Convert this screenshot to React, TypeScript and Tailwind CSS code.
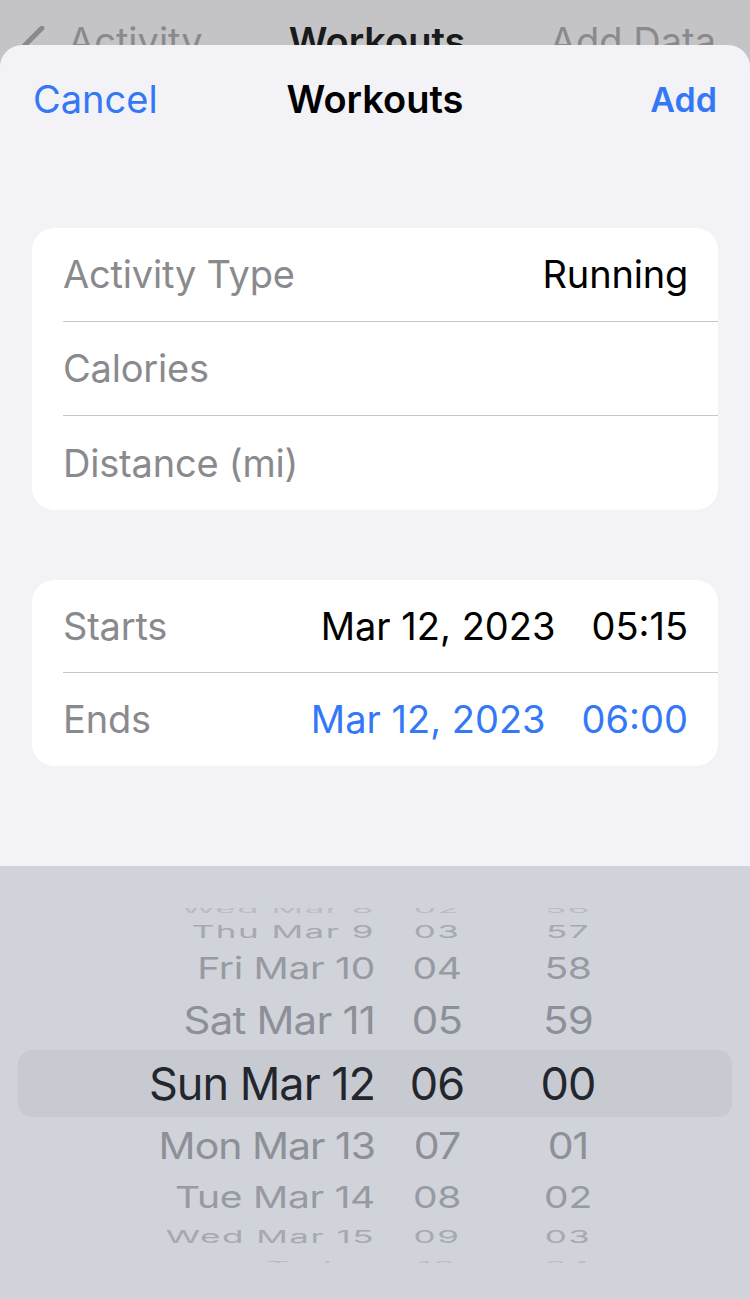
import React from "react";

const font = "font-['Inter','Liberation_Sans',sans-serif]";

type WheelRow = {
  date: string;
  hour: string;
  min: string;
  h: string;
  scale: string;
  color: string;
  size: string;
  selected?: boolean;
};

const rows: WheelRow[] = [
  { date: "Wed Mar 8", hour: "02", min: "56", h: "h-[22px]", scale: "scale-y-[0.3]", color: "text-[#b9bcc2]", size: "text-[35px] tracking-[1.5px]" },
  { date: "Thu Mar 9", hour: "03", min: "57", h: "h-[30px]", scale: "scale-y-[0.5]", color: "text-[#a6a9af]", size: "text-[35px] tracking-[1.5px]" },
  { date: "Fri Mar 10", hour: "04", min: "58", h: "h-[47px]", scale: "scale-y-[0.78]", color: "text-[#979aa1]", size: "text-[39px] tracking-[-0.3px]" },
  { date: "Sat Mar 11", hour: "05", min: "59", h: "h-[59px]", scale: "scale-y-[0.9]", color: "text-[#8d9097]", size: "text-[42px] tracking-[-0.8px]" },
  { date: "Sun Mar 12", hour: "06", min: "00", h: "h-[67px]", scale: "scale-y-100", color: "text-[#23262d]", size: "text-[45px] tracking-[-1px]", selected: true },
  { date: "Mon Mar 13", hour: "07", min: "01", h: "h-[56px]", scale: "scale-y-[0.9]", color: "text-[#8d9097]", size: "text-[41px] tracking-[-1px]" },
  { date: "Tue Mar 14", hour: "08", min: "02", h: "h-[46px]", scale: "scale-y-[0.78]", color: "text-[#979aa1]", size: "text-[39px] tracking-[-0.3px]" },
  { date: "Wed Mar 15", hour: "09", min: "03", h: "h-[29px]", scale: "scale-y-[0.5]", color: "text-[#a6a9af]", size: "text-[35px] tracking-[1.5px]" },
  { date: "Today", hour: "10", min: "04", h: "h-[20px]", scale: "scale-y-[0.3]", color: "text-[#b9bcc2]", size: "text-[35px] tracking-[1.5px]" },
];

function Row({ label, children, last, tall }: { label: string; children?: React.ReactNode; last?: boolean; tall?: boolean }) {
  const h = tall ? "h-[94px]" : "h-[93px]";
  return (
    <div className="pl-[31px]">
      <div
        className={
          last
            ? `flex ${h} items-center justify-between pr-[30px]`
            : `flex ${h} items-center justify-between border-b border-[#c8c8cc] pr-[30px]`
        }
      >
        <span className="text-[38px] tracking-[-0.2px] text-[#8a8a8e]">{label}</span>
        {children}
      </div>
    </div>
  );
}

export default function App() {
  return (
    <div className={`h-[1299px] w-[750px] overflow-hidden bg-[#c4c4c6] ${font}`}>
      {/* page behind the sheet */}
      <div className="flex h-[45px] items-start overflow-hidden pt-[22px] text-[38px] leading-none">
        <svg className="ml-[18px] mt-[4px]" width="28" height="40" viewBox="0 0 28 40">
          <path d="M24 2 L6 20 L24 38" fill="none" stroke="#8a8a8e" strokeWidth="5" strokeLinecap="round" strokeLinejoin="round" />
        </svg>
        <span className="ml-[22px] text-[#8a8a8e]">Activity</span>
        <span className="ml-[86px] font-semibold text-[#1a1a1a]">Workouts</span>
        <span className="ml-auto mr-[34px] text-[#8a8a8e]">Add Data</span>
      </div>

      <div className="flex h-[1254px] flex-col overflow-hidden rounded-t-[22px] bg-[#f2f2f7]">
        <div className="relative flex h-[108px] items-center justify-between px-[33px]">
          <span className="text-[38px] text-[#3478f6]">Cancel</span>
          <span className="absolute left-0 right-0 text-center text-[38px] font-semibold text-black">Workouts</span>
          <span className="text-[34px] font-semibold text-[#3478f6]">Add</span>
        </div>

        <div className="mx-[32px] mt-[75px] overflow-hidden rounded-[22px] bg-white">
          <Row label="Activity Type" tall>
            <span className="text-[38px] tracking-[-0.2px] text-black">Running</span>
          </Row>
          <Row label="Calories" tall />
          <Row label="Distance (mi)" tall last />
        </div>

        <div className="mx-[32px] mt-[70px] overflow-hidden rounded-[22px] bg-white">
          <Row label="Starts">
            <span className="flex gap-[36px] text-[38px] tracking-[0px] text-black">
              <span>Mar 12, 2023</span>
              <span>05:15</span>
            </span>
          </Row>
          <Row label="Ends" last>
            <span className="flex gap-[36px] text-[38px] tracking-[0px] text-[#3478f6]">
              <span>Mar 12, 2023</span>
              <span>06:00</span>
            </span>
          </Row>
        </div>

        <div className="mt-[100px] flex-1 bg-[#d1d3da] pt-[42px]">
          <div className="h-[355px] overflow-hidden">
            <div className="-mt-[16px]">
              {rows.map((r) => (
                <div
                  key={r.date}
                  className={
                    r.selected
                      ? "mx-[18px] grid grid-cols-[357px_124px_138px] items-center overflow-hidden rounded-[14px] bg-[#c7cad1] " + r.h
                      : "mx-[18px] grid grid-cols-[357px_124px_138px] items-center overflow-hidden " + r.h
                  }
                >
                  <span className={`text-right leading-none ${r.size} ${r.scale} ${r.color}`}>{r.date}</span>
                  <span className={`text-center leading-none ${r.size} ${r.scale} ${r.color}`}>{r.hour}</span>
                  <span className={`text-center leading-none ${r.size} ${r.scale} ${r.color}`}>{r.min}</span>
                </div>
              ))}
            </div>
          </div>
        </div>
      </div>
    </div>
  );
}
